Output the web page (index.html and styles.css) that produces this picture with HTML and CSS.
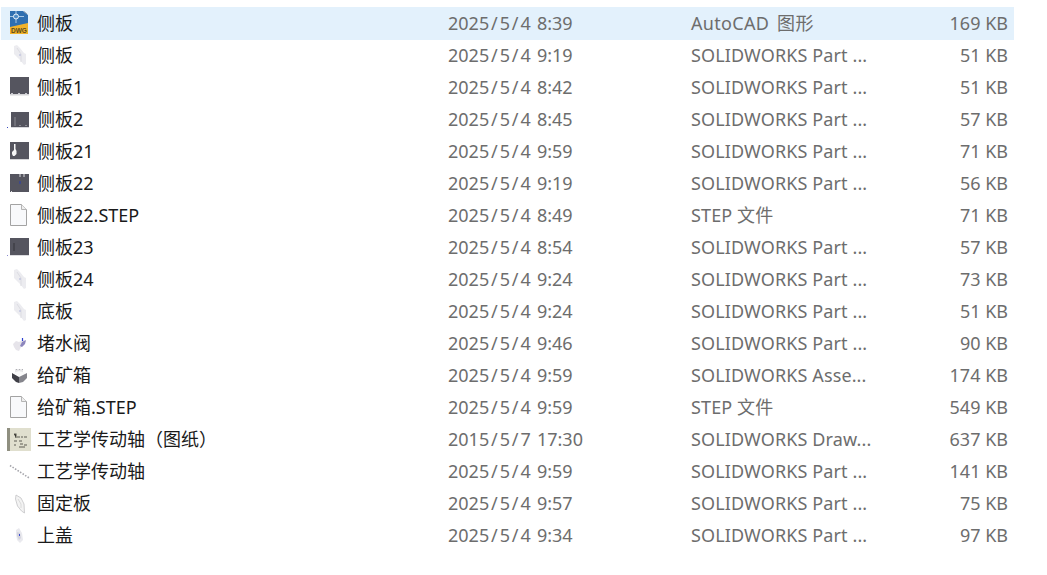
FILE: index.html
```html
<!DOCTYPE html>
<html lang="zh-CN">
<head>
<meta charset="utf-8">
<title>文件列表</title>
<link rel="stylesheet" href="styles.css">
</head>
<body>
<svg class="defs" width="0" height="0" aria-hidden="true">
  <symbol id="dark" viewBox="0 0 26 26">
    <rect x="4" y="2" width="19" height="17" fill="#55555f"/>
    <rect x="4" y="19" width="19" height="1.500" fill="#d5d5d8"/>
    <path d="M5 18.500h2M12 18.500h2M19 18.500h2" stroke="#c9c9cf"/>
  </symbol>
  <symbol id="dark2" viewBox="0 0 26 26">
    <rect x="5" y="5" width="18" height="15" fill="#55555f"/>
    <rect x="5" y="20" width="18" height="1" fill="#d8d8dc"/>
    <rect x="1" y="20" width="1" height="1" fill="#3b4bc0"/>
    <path d="M9 10v9M13 18.500h2M19 18.500h2" stroke="#8c8c94"/>
  </symbol>
  <symbol id="dark21" viewBox="0 0 26 26">
    <rect x="4" y="3" width="19" height="18" fill="#55555f"/>
    <rect x="4" y="20" width="19" height="1" fill="#d5d5d8"/>
    <path d="M6 13l2-2V5h1.500v5l1 2v3l-2 2H7l-1-2z" fill="#f6f6f6"/>
  </symbol>
  <symbol id="dark22" viewBox="0 0 26 26">
    <rect x="4" y="3" width="19" height="18" fill="#55555f"/>
    <path d="M14 3v3M18 3v3M5 20.500h1" stroke="#dcdce0"/>
    <path d="M14 10v3" stroke="#2b3fb0"/>
  </symbol>
  <symbol id="dark23" viewBox="0 0 26 26">
    <rect x="4" y="3" width="19" height="17" fill="#55555f"/>
    <rect x="4" y="20" width="19" height="1" fill="#dcdce0"/>
    <path d="M8 8v8" stroke="#34343b"/>
    <rect x="1" y="20" width="1" height="1" fill="#8a8ad0"/>
  </symbol>
  <symbol id="file" viewBox="0 0 26 26">
    <path d="M4.500 1.500h11l5 5v16h-16z" fill="#f8f9fb" stroke="#a3a3a3"/>
    <path d="M15.500 1.500v5h5" fill="#eeeeee" stroke="#b5b5b5"/>
  </symbol>
  <symbol id="sheet" viewBox="0 0 26 26">
    <path d="M8 3l3-1 3 3 4 5 2 1v10l-2 1-4-5-3-3-3-3z" fill="#ececf0"/>
    <path d="M11 5l4 6v8" fill="none" stroke="#dcdce2"/>
    <path d="M14 11v2" stroke="#b3b8dc"/>
  </symbol>
  <symbol id="valve" viewBox="0 0 26 26">
    <path d="M7 13l3-3 3 1 4-2 3 1-2 4-3 2-2 4-3-1-2-3z" fill="#e6e4ea"/>
    <path d="M16 11l4-2-1 4-3 3-2-1z" fill="#8d86bd"/>
    <path d="M16.500 7v3" stroke="#2b3fd0" stroke-width="1.200"/>
  </symbol>
  <symbol id="box" viewBox="0 0 26 26">
    <path d="M9 6h8v4l-8 0z" fill="#e6e6e8"/>
    <path d="M10 6.500h1M13 6.500h1M16 6.500h1" stroke="#b0b0b4"/>
    <path d="M6 10l7 4v6l-3-1-4-4z" fill="#3f3f47"/>
    <path d="M13 14l8-4v5l-4 4-4 1z" fill="#85858c"/>
    <path d="M7 10l6-2 7 2-7 3z" fill="#fafafa"/>
  </symbol>
  <symbol id="drawing" viewBox="0 0 26 26">
    <rect x="1" y="1" width="24" height="23" fill="#e0dfce"/>
    <rect x="1" y="1" width="3" height="23" fill="#8f8f80"/>
    <path d="M8 7h2v4M11 10h3M15 10h2M18 10h3M8 14h3M13 14h3M14 17h3M18 18h3M8 18h2M13 20h6" stroke="#5d5d53" stroke-width="1.100"/>
  </symbol>
  <symbol id="shaft" viewBox="0 0 26 26">
    <path d="M4 6.500l20 13" fill="none" stroke="#a4a4aa" stroke-width="1.600" stroke-dasharray="1.500 1.500"/>
  </symbol>
  <symbol id="plate" viewBox="0 0 26 26">
    <path d="M10 4l5 3 3 6 .5 9-3-2-4-5-2-7z" fill="#f3f3f3" stroke="#c3c3c5" stroke-width=".8"/>
    <path d="M12 8l3 5v4" fill="none" stroke="#dadada"/>
  </symbol>
  <symbol id="cover" viewBox="0 0 26 26">
    <path d="M10 7l3-2 3 5 1 7-3 3-3-3-1-6z" fill="#e9e9ee"/>
    <path d="M11 9l3 1 1 5-2 2-2-4z" fill="#d4d4de"/>
    <path d="M13.500 11v2" stroke="#3b4bd0"/>
  </symbol>
</svg>

<ul class="list">
  <li class="row selected"><svg class="ico" viewBox="0 0 26 26">
    <path d="M4 0h18v15L4 17z" fill="#2f6fb0"/>
    <path d="M4 5.500h14M10 0v12" stroke="#a9c8e4" stroke-width="1"/>
    <circle cx="10" cy="5.500" r="2.500" fill="#4e8cc6" stroke="#e8f1f8"/>
    <path d="M17 0h5v4z" fill="#e3f1fc"/>
    <path d="M18 .5l3 2.500" stroke="#8d99a6"/>
    <path d="M4 16l18-4v11H4z" fill="#f2b32a"/>
    <text class="dwg-label" x="5" y="22">DWG</text>
  </svg><span class="name">侧板</span><span class="date">2025<i>/</i>5<i>/</i>4 8:39</span><span class="type type-cad">AutoCAD 图形</span><span class="size">169 KB</span></li>
  <li class="row"><svg class="ico"><use href="#sheet"/></svg><span class="name">侧板</span><span class="date">2025<i>/</i>5<i>/</i>4 9:19</span><span class="type">SOLIDWORKS Part ...</span><span class="size">51 KB</span></li>
  <li class="row"><svg class="ico"><use href="#dark"/></svg><span class="name">侧板1</span><span class="date">2025<i>/</i>5<i>/</i>4 8:42</span><span class="type">SOLIDWORKS Part ...</span><span class="size">51 KB</span></li>
  <li class="row"><svg class="ico"><use href="#dark2"/></svg><span class="name">侧板2</span><span class="date">2025<i>/</i>5<i>/</i>4 8:45</span><span class="type">SOLIDWORKS Part ...</span><span class="size">57 KB</span></li>
  <li class="row"><svg class="ico"><use href="#dark21"/></svg><span class="name">侧板21</span><span class="date">2025<i>/</i>5<i>/</i>4 9:59</span><span class="type">SOLIDWORKS Part ...</span><span class="size">71 KB</span></li>
  <li class="row"><svg class="ico"><use href="#dark22"/></svg><span class="name">侧板22</span><span class="date">2025<i>/</i>5<i>/</i>4 9:19</span><span class="type">SOLIDWORKS Part ...</span><span class="size">56 KB</span></li>
  <li class="row"><svg class="ico"><use href="#file"/></svg><span class="name">侧板22.STEP</span><span class="date">2025<i>/</i>5<i>/</i>4 8:49</span><span class="type">STEP 文件</span><span class="size">71 KB</span></li>
  <li class="row"><svg class="ico"><use href="#dark23"/></svg><span class="name">侧板23</span><span class="date">2025<i>/</i>5<i>/</i>4 8:54</span><span class="type">SOLIDWORKS Part ...</span><span class="size">57 KB</span></li>
  <li class="row"><svg class="ico"><use href="#sheet"/></svg><span class="name">侧板24</span><span class="date">2025<i>/</i>5<i>/</i>4 9:24</span><span class="type">SOLIDWORKS Part ...</span><span class="size">73 KB</span></li>
  <li class="row"><svg class="ico"><use href="#sheet"/></svg><span class="name">底板</span><span class="date">2025<i>/</i>5<i>/</i>4 9:24</span><span class="type">SOLIDWORKS Part ...</span><span class="size">51 KB</span></li>
  <li class="row"><svg class="ico"><use href="#valve"/></svg><span class="name">堵水阀</span><span class="date">2025<i>/</i>5<i>/</i>4 9:46</span><span class="type">SOLIDWORKS Part ...</span><span class="size">90 KB</span></li>
  <li class="row"><svg class="ico"><use href="#box"/></svg><span class="name">给矿箱</span><span class="date">2025<i>/</i>5<i>/</i>4 9:59</span><span class="type">SOLIDWORKS Asse...</span><span class="size">174 KB</span></li>
  <li class="row"><svg class="ico"><use href="#file"/></svg><span class="name">给矿箱.STEP</span><span class="date">2025<i>/</i>5<i>/</i>4 9:59</span><span class="type">STEP 文件</span><span class="size">549 KB</span></li>
  <li class="row"><svg class="ico"><use href="#drawing"/></svg><span class="name">工艺学传动轴（图纸）</span><span class="date">2015<i>/</i>5<i>/</i>7 17:30</span><span class="type">SOLIDWORKS Draw...</span><span class="size">637 KB</span></li>
  <li class="row"><svg class="ico"><use href="#shaft"/></svg><span class="name">工艺学传动轴</span><span class="date">2025<i>/</i>5<i>/</i>4 9:59</span><span class="type">SOLIDWORKS Part ...</span><span class="size">141 KB</span></li>
  <li class="row"><svg class="ico"><use href="#plate"/></svg><span class="name">固定板</span><span class="date">2025<i>/</i>5<i>/</i>4 9:57</span><span class="type">SOLIDWORKS Part ...</span><span class="size">75 KB</span></li>
  <li class="row"><svg class="ico"><use href="#cover"/></svg><span class="name">上盖</span><span class="date">2025<i>/</i>5<i>/</i>4 9:34</span><span class="type">SOLIDWORKS Part ...</span><span class="size">97 KB</span></li>
</ul>
</body>
</html>
```

FILE: styles.css
```css
html, body {
  margin: 0;
  padding: 0;
  background: #fff;
  overflow: hidden;
}
.defs {
  position: absolute;
}
.list {
  list-style: none;
  margin: 0;
  padding: 8px 33px 0 1px;
  font-family: "Noto Sans", "Noto Sans CJK SC", sans-serif;
  font-size: 18px;
  line-height: 24px;
}
.row {
  display: grid;
  grid-template-columns: 36px 411px 243px 1fr 72px;
  align-items: center;
  height: 32px;
  padding-right: 6px;
  white-space: nowrap;
}
.selected {
  background: #e3f1fc;
  box-shadow: 0 -1px 0 #e3f1fc;
}
.ico {
  width: 26px;
  height: 26px;
  margin-left: 5px;
}
.dwg-label {
  font-family: "Liberation Sans", sans-serif;
  font-size: 6.5px;
  font-weight: 700;
  fill: #5a4a20;
}
.name, .date, .type, .size {
  margin-bottom: 2px;
}
.name {
  color: #1a1a1a;
}
.date, .type, .size {
  color: #6d6d6d;
}
.date {
  word-spacing: 1.500px;
}
.date i {
  font-style: normal;
  margin: 0 1.900px;
}
.type {
  letter-spacing: .12px;
}
.type-cad {
  letter-spacing: .3px;
  word-spacing: 3px;
}
.size {
  text-align: right;
}
```
